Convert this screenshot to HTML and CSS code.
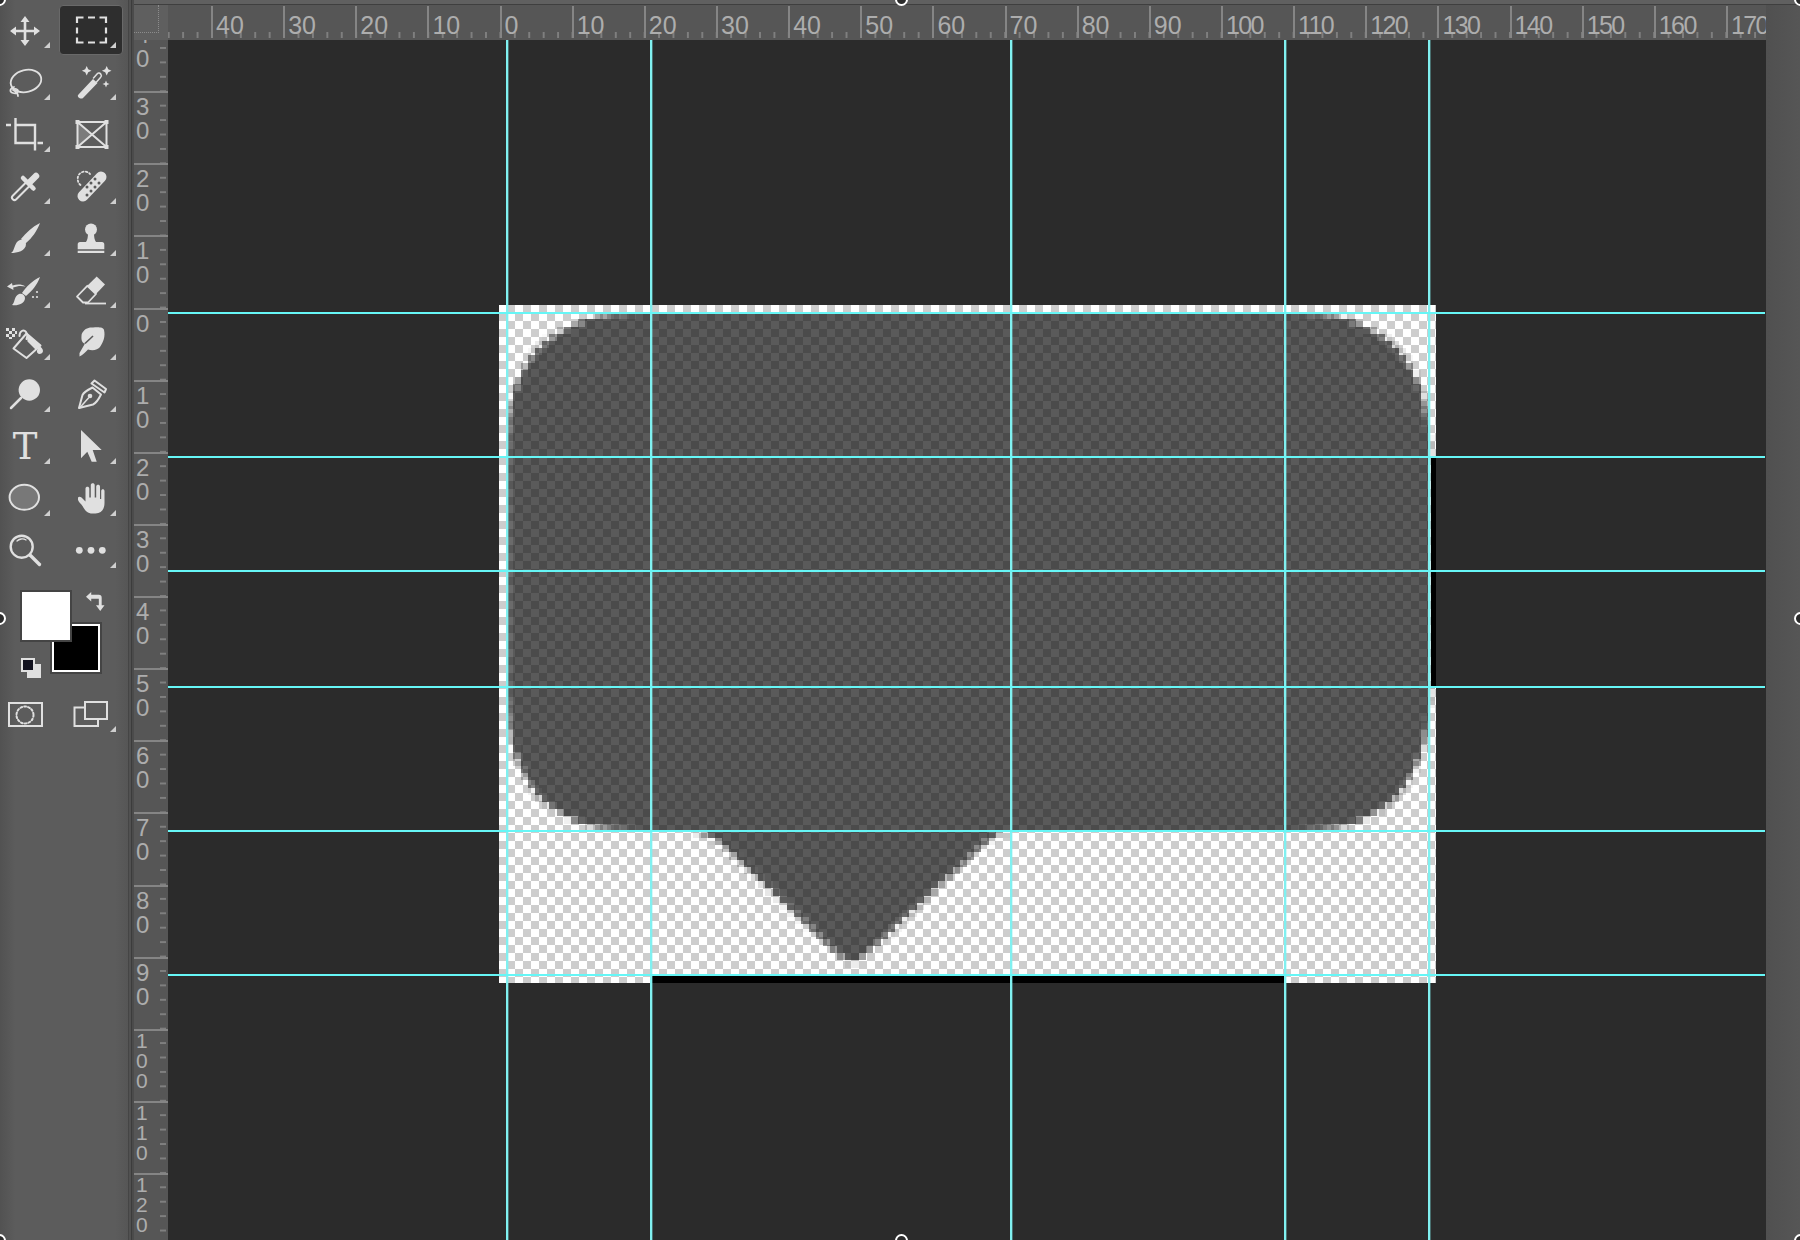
FILE: index.html
```html
<!DOCTYPE html>
<html lang="en">
<head>
    <meta charset="UTF-8">
    <title>Photoshop</title>
    <link rel="stylesheet" href="styles.css">
</head>
<body>
    <div class="app">
        <!-- Tools -->
        <div class="toolbar">
            <div class="tools">
                <div class="tool more"><svg viewBox="0 0 50 52"><path d="M25 12l4.500 6h-3.200v7.700h7.700v-3.200l6 4.500-6 4.500v-3.200h-7.700v7.700h3.200l-4.500 6-4.500-6h3.200v-7.700h-7.700v3.200l-6-4.500 6-4.500v3.200h7.700v-7.700h-3.200z"/></svg></div>
                <div class="tool more selected"><svg viewBox="0 0 50 52"><path class="line sq" d="M11 19v-5.500h6.500M22 13.500h7M33.500 13.500h6.500v5.500M40 23.500v6M40 33.500v5h-6.500M29 38.500h-7M17.500 38.500h-6.500v-5M11 29.500v-6" stroke-width="2.200"/></svg></div>

                <div class="tool more"><svg viewBox="0 0 50 52"><ellipse class="line" cx="26" cy="25" rx="15.500" ry="11" transform="rotate(-14 26 25)"/><path class="line" d="M14 31c-4 1-5 5-1 6 3 1 5 0 5-2 0-2-3-3-5-1 2 1 5 3 5 6"/></svg></div>
                <div class="tool more"><svg viewBox="0 0 50 52"><path d="M12.500 38.500l14.500-15.500 4.500 4-14.500 15c-2 2-7-1.500-4.500-3.500z"/><path class="line" d="M27.500 22l4-4.500c1-1 2.500-.5 3.500 1 .7 1 .5 2-.5 3l-4 4.500" stroke-width="1.500"/><path d="M20.700 10l1.500 3.200 3.300 1.500-3.300 1.500-1.500 3.300-1.500-3.300-3.300-1.500 3.300-1.500zM40.700 10l1.500 3.200 3.300 1.500-3.300 1.500-1.500 3.300-1.500-3.300-3.300-1.500 3.300-1.500zM40 24.500l1 2.500 2.500 1-2.500 1-1 2.500-1-2.500-2.500-1 2.500-1z"/></svg></div>

                <div class="tool more"><svg viewBox="0 0 50 52"><path class="line sq" d="M15.500 10v25h20M15 17h20v25.500M6 17h5M37.500 35h5.500" stroke-width="2.400"/></svg></div>
                <div class="tool"><svg viewBox="0 0 50 52"><path d="M11.500 14l14 12-14 12z" fill="#7b7b7b"/><path class="line sq" d="M11.500 14h29v25h-29zM11.500 14l29 25M40.500 14l-29 25" stroke-width="2"/><path d="M9.500 12h4v4h-4zM38.500 12h4v4h-4zM9.500 37h4v4h-4zM38.500 37h4v4h-4z"/></svg></div>

                <div class="tool more"><svg viewBox="0 0 50 52"><path class="line" d="M14.500 37.500l13-13" stroke-width="7"/><path d="M14.500 37.500l13-13" fill="none" stroke="#5a5a5a" stroke-width="3" stroke-linecap="round"/><path class="line" d="M23 18l10.500 10.500" stroke-width="4.500"/><path class="line" d="M29.500 22.500l6.500-6.500" stroke-width="6.500"/></svg></div>
                <div class="tool more"><svg viewBox="0 0 50 52"><path class="line" d="M14.500 25c-4-3-4-11 2-13 3-1 6 0 7.500 2" stroke-width="1.800" stroke-dasharray="1.600 2.200"/><path class="line" d="M17 36l18-19" stroke-width="11"/><g class="holes"><circle cx="21" cy="27" r="1.500"/><circle cx="25" cy="23" r="1.500"/><circle cx="29" cy="27" r="1.500"/><circle cx="25" cy="31" r="1.500"/><circle cx="21" cy="35" r="1.500"/><circle cx="29" cy="19" r="1.500"/><circle cx="33" cy="23" r="1.500"/></g></svg></div>

                <div class="tool more"><svg viewBox="0 0 50 52"><path d="M40 11c-3 8-8 15-14 20l-5-4c5-6 11-12 19-16zM20 28c3-1 6 1 6 4 0 7-9 9-15 9 4-2 3-11 9-13z"/></svg></div>
                <div class="tool more"><svg viewBox="0 0 50 52"><circle cx="25" cy="17.500" r="6"/><path d="M22 21h6c0 4 .5 7 2 9h6c1.500 0 2.300 1 2.300 2.500v4.800h-26.600v-4.800c0-1.500.8-2.500 2.300-2.500h6c1.500-2 2-5 2-9zM11.700 38.700h26.600v2.200h-26.600z"/></svg></div>

                <div class="tool more"><svg viewBox="0 0 50 52"><path d="M40 13c-3 8-8 14-14 19l-4-3c4-6 10-12 18-16zM19 30c3-1 6 1 6 4 0 6-8 8-13 7 3-2 2-9 7-11z"/><path d="M7 22.500l5-3.500.5 2.500c5-1.500 9-1.500 13 1-4-1-8-.8-12.300 1l.3 2.500z"/><circle cx="37" cy="28" r="1.100"/><circle cx="33" cy="33" r="1.100"/><circle cx="37" cy="33" r="1.100"/></svg></div>
                <div class="tool more"><svg viewBox="0 0 50 52"><path d="M30.700 12.500l8.300 8-9 9.500-8.700-8.200z"/><path class="line" d="M21.300 21.800l8.700 8.200-8 8.500h-5l-6-6z" stroke-width="1.800"/><path class="line sq" d="M19 39.500h21" stroke-width="1.800"/></svg></div>

                <div class="tool more"><svg viewBox="0 0 50 52"><path d="M6 12h3v3h-3zM12 12h3v3h-3zM9 15h3v3h-3zM15 15h2v3h-2zM6 18h3v3h-3zM12 18h3v3h-3zM9 21h3v2h-3z"/><path class="line" d="M13.500 32.500l13-15 14 12-14 12.500z" stroke-width="2"/><path class="line" d="M19.500 20c0-5 4-7 6.500-4 1.500 2 1.500 5 .5 7" stroke-width="2"/><path d="M26.500 17.500l14 11.500-5 4.500-8-8zM39 29.500c2 1.500 4 3.500 4 5.500s-2 3-3.500 3-3-1.500-2.500-3.500z"/></svg></div>
                <div class="tool more"><svg viewBox="0 0 50 52"><path d="M13.500 40.500v-3.500l5.500-9.500c-3.500-.5-4-4.500-3.300-9.500 2.300-5 6.300-7 11.300-6.500 5-.5 10.500-.5 11 2.500 1.500 6-.5 12-4 17-2 3-7.500 4-12 2.500-2.500 2.500-5.500 6-8.500 7z"/><path d="M19 27.500l8-7.500" fill="none" stroke="#5a5a5a" stroke-width="1.600"/></svg></div>

                <div class="tool more"><svg viewBox="0 0 50 52"><circle cx="29.300" cy="22" r="10.700"/><path class="line" d="M21 30l-10 10" stroke-width="2.500"/></svg></div>
                <div class="tool more"><svg viewBox="0 0 50 52"><path class="line" d="M13 40l3.500-13c1.500-3 6-5.500 10-7.500l8.500 7c-2 4-4.500 8.500-8 10zM25.500 15.500l13 9 1.500-3.500-11.500-8.500z" stroke-width="2"/><circle cx="24" cy="28" r="2.300"/><path class="line" d="M13.500 40l9-10" stroke-width="1.500"/></svg></div>

                <div class="tool more"><svg viewBox="0 0 50 52"><text class="type-t" x="25" y="39">T</text></svg></div>
                <div class="tool more"><svg viewBox="0 0 50 52"><path d="M15 10l20.700 20h-9l4 11.700h-5l-4.400-10-6.300 6.600z"/></svg></div>

                <div class="tool more"><svg viewBox="0 0 50 52"><ellipse cx="24.300" cy="25.300" rx="14.700" ry="12.500" fill="#787878" stroke="#e0e0e0" stroke-width="2"/></svg></div>
                <div class="tool more"><svg viewBox="0 0 50 52"><path d="M12 25.500c1.500-1.300 3-.5 5 1.500l2.500 2.500v-13c0-2.500 3.800-2.500 3.800 0v9h1.500v-12.500c0-2.500 3.900-2.500 3.900 0v12.500h1.500v-11c0-2.500 3.800-2.500 3.800 0v12.500h1.200v-8c0-2.300 3.300-2.300 3.300 0v12c0 6-3 10.500-9 10.500h-3c-6 0-8-4-10-7.500-1.500-2.500-5-5-4.500-7z"/></svg></div>

                <div class="tool"><svg viewBox="0 0 50 52"><circle class="line" cx="21.700" cy="22.700" r="11" stroke-width="2.400"/><path class="line" d="M17 17c2-2 6-3 9-1" stroke-width="1.300"/><path class="line" d="M30 31l9.500 9.500" stroke-width="3.300"/></svg></div>
                <div class="tool more"><svg viewBox="0 0 50 52"><circle cx="13.300" cy="26.300" r="3.400"/><circle cx="25" cy="26.300" r="3.400"/><circle cx="36.300" cy="26.300" r="3.400"/></svg></div>
            </div>

            <div class="colors">
                <div class="swatch-bg"></div>
                <div class="swatch-fg"></div>
                <svg class="swap" viewBox="0 0 20 20"><path d="M0 5l5.500-5v3h8c2 0 3 1 3 3v8h3l-4.500 6-4.500-6h3v-7h-8v3z"/></svg>
                <div class="mini-bg"></div>
                <div class="mini-fg"></div>
            </div>

            <div class="modes">
                <div class="tool mode"><svg viewBox="0 0 50 40"><path class="line sq" d="M9 7h33v23h-33z" stroke-width="2"/><circle class="line" cx="25" cy="19" r="8.500" stroke-width="2" stroke-dasharray="1.800 2.100"/></svg></div>
                <div class="tool mode more"><svg viewBox="0 0 50 40"><path class="line sq" d="M19 11.500h-10.500v18.500h23.500v-7" stroke-width="2"/><path class="line sq" d="M19 6h22v17h-22z" stroke-width="2"/></svg></div>
            </div>
        </div>

        <div class="divider"></div>
        <div class="top-strip"></div>
        <div class="corner"></div>

        <!-- Rulers -->
        <div class="ruler-h">
            <div class="h-cell">40</div><div class="h-cell">30</div><div class="h-cell">20</div><div class="h-cell">10</div>
            <div class="h-cell">0</div><div class="h-cell">10</div><div class="h-cell">20</div><div class="h-cell">30</div>
            <div class="h-cell">40</div><div class="h-cell">50</div><div class="h-cell">60</div><div class="h-cell">70</div>
            <div class="h-cell">80</div><div class="h-cell">90</div><div class="h-cell tight">100</div><div class="h-cell tight">110</div>
            <div class="h-cell tight">120</div><div class="h-cell tight">130</div><div class="h-cell tight">140</div><div class="h-cell tight">150</div>
            <div class="h-cell tight">160</div><div class="h-cell tight">170</div>
        </div>
        <div class="ruler-v">
            <div class="v-cell">4<br>0</div><div class="v-cell">3<br>0</div><div class="v-cell">2<br>0</div><div class="v-cell">1<br>0</div>
            <div class="v-cell">0</div><div class="v-cell">1<br>0</div><div class="v-cell">2<br>0</div><div class="v-cell">3<br>0</div>
            <div class="v-cell">4<br>0</div><div class="v-cell">5<br>0</div><div class="v-cell">6<br>0</div><div class="v-cell">7<br>0</div>
            <div class="v-cell">8<br>0</div><div class="v-cell">9<br>0</div><div class="v-cell small">1<br>0<br>0</div><div class="v-cell small">1<br>1<br>0</div>
            <div class="v-cell small">1<br>2<br>0</div>
        </div>

        <!-- Canvas -->
        <div class="canvas">
            <div class="doc">
                <canvas id="bubble" class="bubble" width="130" height="94"></canvas>
                <div class="edge-right"></div>
                <div class="edge-bottom"></div>
            </div>
            <div class="guide-v g1"></div>
            <div class="guide-v g2"></div>
            <div class="guide-v g3"></div>
            <div class="guide-v g4"></div>
            <div class="guide-v g5"></div>
            <div class="guide-h h1"></div>
            <div class="guide-h h2"></div>
            <div class="guide-h h3"></div>
            <div class="guide-h h4"></div>
            <div class="guide-h h5"></div>
            <div class="guide-h h6"></div>
        </div>

        <div class="right-panel"></div>

        <!-- Selection handles -->
        <div class="handle tl"></div>
        <div class="handle tc"></div>
        <div class="handle tr"></div>
        <div class="handle ml"></div>
        <div class="handle mr"></div>
        <div class="handle bl"></div>
        <div class="handle bc"></div>
        <div class="handle br"></div>
    </div>
    <script src="bubble.js"></script>
</body>
</html>
```

FILE: styles.css
```css
html, body {
    margin: 0;
    height: 100%;
    overflow: hidden;
    background: #2b2b2b;
}

.app {
    position: relative;
    display: grid;
    grid-template-columns: 128px 6px 34px 1598px 34px;
    grid-template-rows: 5px 35px 1200px;
    width: 1800px;
    height: 1240px;
    overflow: hidden;
    font-family: "Liberation Sans", Arial, sans-serif;
    color: #adadad;
}

/* toolbar */
.toolbar {
    grid-column: 1;
    grid-row: 1 / 4;
    background: linear-gradient(90deg, #525252, #5c5c5c 12%, #5c5c5c 90%, #565656);
    padding-top: 4px;
}

.tools {
    display: grid;
    grid-template-columns: 50px 50px;
    grid-auto-rows: 52px;
    column-gap: 16px;
}

.tool {
    position: relative;
    color: #e0e0e0;
}

.tool svg {
    position: relative;
    display: block;
    width: 50px;
    height: 52px;
    fill: currentColor;
    stroke-width: 1.8;
}

.line {
    fill: none;
    stroke: #e0e0e0;
    stroke-linecap: round;
    stroke-linejoin: round;
}

.line.sq {
    stroke-linecap: butt;
    stroke-linejoin: miter;
}

.holes {
    fill: #5a5a5a;
}

.type-t {
    font-family: "DejaVu Serif", serif;
    font-size: 37px;
    text-anchor: middle;
    fill: #e0e0e0;
}

.tool.more::after {
    content: "";
    position: absolute;
    left: 44px;
    top: 38px;
    border-style: solid;
    border-width: 0 0 6px 6px;
    border-color: transparent transparent #cfcfcf transparent;
}

.tool.selected::before {
    content: "";
    position: absolute;
    left: -7px;
    right: -7px;
    top: 1px;
    bottom: 1px;
    box-sizing: border-box;
    background: #2e2e2e;
    border: 1px solid #696969;
    border-radius: 4px;
}

/* colours */
.colors {
    position: relative;
    height: 120px;
}

.swatch-fg, .swatch-bg, .mini-fg, .mini-bg, .swap {
    position: absolute;
}

.swatch-fg {
    left: 20px;
    top: 14px;
    width: 52px;
    height: 52px;
    box-sizing: border-box;
    background: #ffffff;
    border: 2px solid #444444;
}

.swatch-bg {
    left: 52px;
    top: 48px;
    width: 48px;
    height: 48px;
    box-sizing: border-box;
    background: #000000;
    border: 2px solid #ffffff;
    outline: 2px solid #444444;
}

.swap {
    left: 86px;
    top: 16px;
    width: 19px;
    height: 19px;
    fill: #e0e0e0;
}

.mini-bg {
    left: 27px;
    top: 88px;
    width: 14px;
    height: 14px;
    background: #e0e0e0;
}

.mini-fg {
    left: 21px;
    top: 82px;
    width: 14px;
    height: 14px;
    box-sizing: border-box;
    background: #12121f;
    border: 2px solid #e0e0e0;
}

.modes {
    display: grid;
    grid-template-columns: 50px 50px;
    column-gap: 16px;
}

.mode svg {
    height: 40px;
}

.mode.more::after {
    top: 30px;
}

.divider {
    grid-column: 2;
    grid-row: 1 / 4;
    background: linear-gradient(90deg, #454545 0 1px, #515151 1px 3px, #3c3c3c 3px 4px, #4b4b4b 4px);
}

.top-strip {
    grid-column: 3 / 6;
    grid-row: 1;
    background: #606060;
    border-bottom: 1px solid #3f3f3f;
    box-sizing: border-box;
}

/* rulers */
.corner {
    grid-column: 3;
    grid-row: 2;
    position: relative;
    background: #5f5f5f;
}

.corner::after {
    content: "";
    position: absolute;
    left: 0;
    top: 0;
    width: 24px;
    height: 27px;
    border-right: 1px dotted #8c8c8c;
    border-bottom: 1px dotted #8c8c8c;
}

.ruler-h {
    grid-column: 4;
    grid-row: 2;
    display: flex;
    overflow: hidden;
    padding: 1px 0 0 43px;
    background-color: #565656;
    background-image: linear-gradient(90deg, #7f7f7f 2px, transparent 2px);
    background-size: 14.43px 6px;
    background-position: 43px 27px;
    background-repeat: repeat-x;
}

.h-cell {
    flex: none;
    box-sizing: border-box;
    width: 72.15px;
    height: 32px;
    padding: 5px 0 0 3px;
    border-left: 2px solid #858585;
    font-size: 25px;
    line-height: 28px;
}

.h-cell.tight {
    letter-spacing: -1.6px;
}

.ruler-v {
    grid-column: 3;
    grid-row: 3;
    overflow: hidden;
    background-color: #565656;
    background-image: linear-gradient(180deg, #7f7f7f 2px, transparent 2px);
    background-size: 6px 14.43px;
    background-position: 26px 7px;
    background-repeat: repeat-y;
}

.v-cell {
    box-sizing: border-box;
    height: 72.13px;
    padding: 2px 0 0 2px;
    border-top: 2px solid #858585;
    font-size: 24px;
    line-height: 24px;
}

.v-cell:first-child {
    margin-top: -21px;
}

.v-cell.small {
    padding-top: 0;
    font-size: 21px;
    line-height: 20px;
}

/* canvas */
.canvas {
    grid-column: 4;
    grid-row: 3;
    position: relative;
    background: #2b2b2b;
}

.doc {
    position: absolute;
    left: 331px;
    top: 265px;
    width: 937px;
    height: 678px;
    background: conic-gradient(#cdcdcd 25%, #ffffff 0 50%, #cdcdcd 0 75%, #ffffff 0) 0 0 / 16px 16px;
}

.bubble {
    position: absolute;
    left: 0;
    top: 0;
    width: 936px;
    height: 677px;
    image-rendering: pixelated;
}

.edge-right {
    position: absolute;
    left: 932px;
    top: 152px;
    width: 5px;
    height: 230px;
    background: #000000;
}

.edge-bottom {
    position: absolute;
    left: 152px;
    top: 670px;
    width: 634px;
    height: 8px;
    background: #000000;
}

.guide-v, .guide-h {
    position: absolute;
}

.guide-v {
    top: 0;
    bottom: 0;
    width: 2px;
    background: #80f0f0;
    box-shadow: 1px 0 0 rgba(128, 240, 240, 0.35);
}

.guide-h {
    left: 0;
    right: 1px;
    height: 2px;
    background: #66f6f6;
}

.g1 { left: 338px; }
.g2 { left: 482px; }
.g3 { left: 842px; }
.g4 { left: 1116px; }
.g5 { left: 1260px; }

.h1 { top: 272px; }
.h2 { top: 416px; }
.h3 { top: 530px; }
.h4 { top: 646px; }
.h5 { top: 790px; }
.h6 { top: 934px; }

.right-panel {
    grid-column: 5;
    grid-row: 2 / 4;
    background: linear-gradient(90deg, #505050, #565656);
}

/* selection handles */
.handle {
    position: absolute;
    box-sizing: border-box;
    width: 13px;
    height: 13px;
    border: 2.500px solid #ffffff;
    border-radius: 50%;
    background: #2c2c2c;
}

.tl { left: -7px; top: -7px; }
.tc { left: 895px; top: -7px; }
.tr { right: -7px; top: -7px; }
.ml { left: -7px; top: 612px; }
.mr { right: -7px; top: 612px; }
.bl { left: -7px; bottom: -7px; }
.bc { left: 895px; bottom: -7px; }
.br { right: -7px; bottom: -7px; }
```

FILE: bubble.js
```js
// Speech bubble, drawn small and scaled up so the edge stays blocky
const canvas = document.getElementById('bubble');
const ctx = canvas.getContext('2d');
const UNIT = 7.2;

ctx.scale(1 / UNIT, 1 / UNIT);
ctx.fillStyle = 'rgba(20, 20, 20, 0.7)';

ctx.beginPath();
ctx.moveTo(141, 8);
ctx.lineTo(797, 8);
ctx.bezierCurveTo(885, 8, 930, 53, 930, 142);
ctx.lineTo(930, 392);
ctx.bezierCurveTo(930, 481, 885, 526, 797, 526);
ctx.lineTo(515, 526);
ctx.bezierCurveTo(505, 526, 498, 528, 488, 537);
ctx.lineTo(372, 645);
ctx.quadraticCurveTo(355, 669, 338, 648);
ctx.lineTo(220, 537);
ctx.bezierCurveTo(205, 528, 200, 526, 184, 526);
ctx.lineTo(141, 526);
ctx.bezierCurveTo(53, 526, 8, 481, 8, 392);
ctx.lineTo(8, 142);
ctx.bezierCurveTo(8, 53, 53, 8, 141, 8);
ctx.closePath();
ctx.fill();
```
